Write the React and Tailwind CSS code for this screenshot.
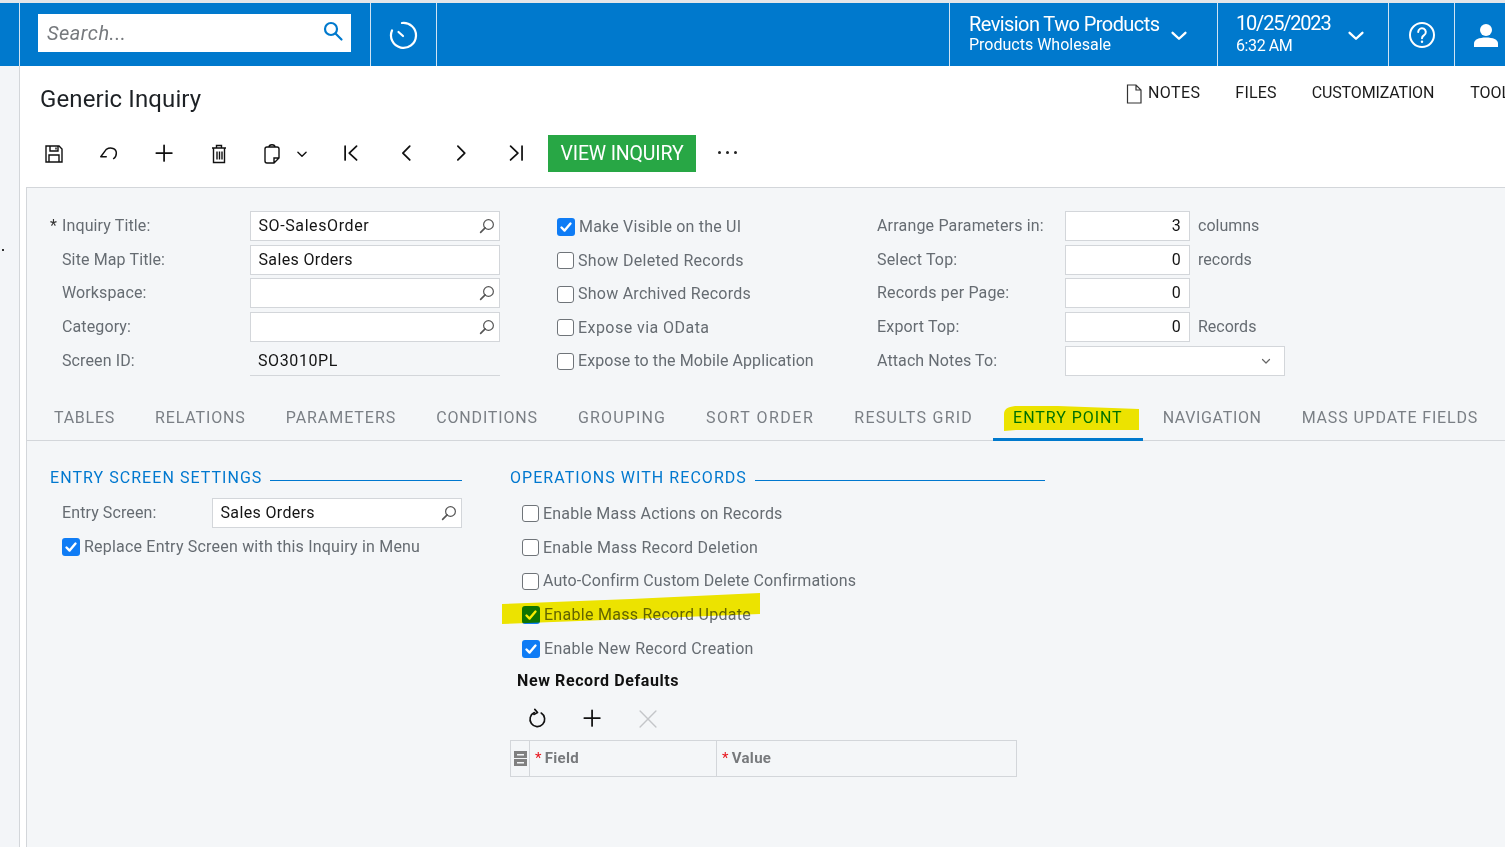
import React from "react";

const S = ({ w = 24, h = 24, vb = "0 0 24 24", c = "", children, sw = 1.8, stroke = "currentColor" }) => (
  <svg width={w} height={h} viewBox={vb} fill="none" stroke={stroke} strokeWidth={sw} strokeLinecap="round" strokeLinejoin="round" className={c}>{children}</svg>
);

const Mag = () => (
  <S w={18} h={18} sw={1.6} stroke="#555"><circle cx="14" cy="10" r="6.5" /><path d="M9.5 14.5 3.5 20.5" strokeWidth="2.2" /></S>
);

const Check = ({ on, label, t = "tracking-[0.2px]" }) => (
  <div className="flex items-center">
    {on ? (
      <span className="w-[18px] h-[18px] rounded-[3px] bg-[#0f7cf5] flex items-center justify-center shrink-0">
        <svg width="14" height="14" viewBox="0 0 14 14" fill="none" stroke="#fff" strokeWidth="2.4" strokeLinecap="round" strokeLinejoin="round"><path d="M2.5 7.5 5.6 10.6 11.5 3.6" /></svg>
      </span>
    ) : (
      <span className="w-[17px] h-[17px] rounded-[3px] bg-white border-[1.5px] border-[#6f7479] shrink-0" />
    )}
    <span className={`ml-[4px] text-[#666c72] whitespace-nowrap ${t}`}>{label}</span>
  </div>
);

const Input = ({ w = "w-[250px]", value, mag, right, track = "tracking-[0.35px]" }) => (
  <div className={`${w} h-[30px] bg-white border border-[#d3d6da] flex items-center pl-[7.5px] pr-[3px] text-[#141414] ${right ? "justify-end pr-[8px]" : "justify-between"}`}>
    <span className={track}>{value}</span>
    {mag && <Mag />}
  </div>
);

const Row = ({ children, c = "" }) => <div className={`h-[33.75px] flex items-center ${c}`}>{children}</div>;

const Section = ({ title }) => (
  <div className="flex items-center h-[20px]">
    <span className="text-[#0078cf] whitespace-nowrap tracking-[1.05px]">{title}</span>
    <span className="flex-1 h-px bg-[#0078cf] ml-[8px] mt-[5px]" />
  </div>
);

const TB = ({ children, w = "w-[55px]" }) => <div className={`${w} h-[37px] flex items-center justify-center text-[#111]`}>{children}</div>;

const tabs = [
  ["TABLES", "tracking-[0.75px]"],
  ["RELATIONS", "tracking-[0.85px]"],
  ["PARAMETERS", "tracking-[0.95px]"],
  ["CONDITIONS", "tracking-[0.85px]"],
  ["GROUPING", "tracking-[1.15px]"],
  ["SORT ORDER", "tracking-[1.5px]"],
  ["RESULTS GRID", "tracking-[1.25px]"],
  ["ENTRY POINT", "tracking-[0.95px]"],
  ["NAVIGATION", "tracking-[0.65px]"],
  ["MASS UPDATE FIELDS", "tracking-[0.85px]"],
];

export default function App() {
  return (
    <div className="relative w-[1505px] h-[847px] overflow-hidden bg-white flex flex-col text-[16px] leading-[20px]" style={{ fontFamily: "Roboto, 'Liberation Sans', sans-serif" }}>
      <div className="h-[3px] bg-[#e4e6e9] shrink-0" />
      <header className="h-[63px] shrink-0 bg-[#0079cd] flex text-white">
        <div className="w-[20px] shrink-0 border-r border-[#cfe3f3]" />
        <div className="w-[351px] shrink-0 border-r border-[#cfe3f3] flex items-center pl-[18px]">
          <div className="w-[313px] h-[38px] mb-[4px] bg-white flex items-center justify-between pl-[9px] pr-[6px]">
            <span className="italic text-[#76797d] text-[20px] tracking-[0.5px]">Search...</span>
            <S w={24} h={24} sw={2.2} stroke="#0079cd" c="mb-[3px]"><circle cx="10" cy="10" r="6" /><path d="M14.5 14.5 20.5 20.5" /></S>
          </div>
        </div>
        <div className="w-[66px] shrink-0 border-r border-[#cfe3f3] flex items-center justify-center">
          <svg width="30" height="30" viewBox="1 0 30 30" fill="none" stroke="#fff" strokeWidth="2.2" strokeLinecap="round"><path d="M14 3A12.500 12.500 0 1 1 4 10.500" /><path d="M10.500 12 15 16" /></svg>
        </div>
        <div className="flex-1 border-r border-[#cfe3f3]" />
        <div className="w-[268px] shrink-0 border-r border-[#cfe3f3] flex items-center pl-[19px] pr-[27px] justify-between">
          <div className="flex flex-col mb-[2px]">
            <span className="text-[20px] leading-[23px] tracking-[-0.58px] whitespace-nowrap">Revision Two Products</span>
            <span className="leading-[18px] text-[16px] whitespace-nowrap">Products Wholesale</span>
          </div>
          <S w={22} h={22} sw={2.6} stroke="#fff" c="mt-[3px]"><path d="M5 8.5 12 15 19 8.5" /></S>
        </div>
        <div className="w-[171px] shrink-0 border-r border-[#cfe3f3] flex items-center pl-[18px] pr-[21px] justify-between">
          <div className="flex flex-col mb-[2px]">
            <span className="text-[20px] leading-[24px] tracking-[-1.2px] whitespace-nowrap">10/25/2023</span>
            <span className="leading-[22px] tracking-[-0.4px] whitespace-nowrap">6:32 AM</span>
          </div>
          <S w={22} h={22} sw={2.6} stroke="#fff" c="mt-[3px]"><path d="M5 8.5 12 15 19 8.5" /></S>
        </div>
        <div className="w-[66px] shrink-0 border-r border-[#cfe3f3] flex items-center justify-center">
          <svg width="28" height="28" viewBox="0 0 28 28" fill="none" stroke="#fff" strokeWidth="2"><circle cx="14" cy="14" r="12" /><path d="M10.2 11a3.8 3.8 0 1 1 5.9 3.2c-1.3.9-2.1 1.6-2.1 3.1" strokeLinecap="round" /><circle cx="14" cy="20.8" r="1.2" fill="#fff" stroke="none" /></svg>
        </div>
        <div className="w-[50px] shrink-0 flex items-center pl-[18px]">
          <svg width="26" height="26" viewBox="0 0 26 26" fill="#fff" className="shrink-0"><circle cx="13" cy="8" r="6" /><path d="M1 25v-3.5C1 17.5 6 15.5 13 15.5s12 2 12 6V25z" /></svg>
        </div>
      </header>

      <div className="flex-1 flex min-h-0">
        <div className="w-[20px] shrink-0 bg-[#f3f5f8] border-r border-[#d3d6da] relative">
          <span className="absolute left-[2px] top-[183px] w-[2px] h-[2px] bg-[#333]" />
        </div>
        <main className="flex-1 min-w-0 flex flex-col">
          <div className="h-[69px] shrink-0 flex justify-between overflow-hidden">
            <h1 className="ml-[20px] mt-[18px] text-[24px] leading-[30px] text-[#1d2125] tracking-[0.1px] whitespace-nowrap">Generic Inquiry</h1>
            <div className="flex pt-[17px] text-[#1a1a1a] whitespace-nowrap w-[380px] shrink-0">
              <svg width="18" height="20" viewBox="0 0 18 20" fill="none" stroke="#333" strokeWidth="1.2" className="mt-[1px] mr-[5px] shrink-0"><path d="M2.5 1h8.5l5 5v13h-13.500zM11 1v5h5" /></svg>
              <span className="mr-[35px] tracking-[0.4px]">NOTES</span>
              <span className="mr-[35px] tracking-[0.2px]">FILES</span>
              <span className="mr-[36px] tracking-[-0.15px]">CUSTOMIZATION</span>
              <span>TOOLS</span>
            </div>
          </div>
          <div className="h-[37px] shrink-0 flex items-center pl-[7px]">
            <TB><svg width="20" height="20" viewBox="0 0 20 20" fill="none" stroke="#111" strokeWidth="1.4" className="mr-[2px]"><path d="M2 2h13l3 3v13H2z" /><path d="M6 2v5h8V2M5 18v-7h10v7M12 3.500v2" /></svg></TB>
            <TB><S w={22} h={22} sw={1.6} c="mr-[2px]"><path d="M9 15H3L9 7C14 4 20 6 20 11C20 14 19 16 17 17" /></S></TB>
            <TB><S w={22} h={22} sw={1.9}><path d="M11 2.500v17M2.500 11h17" /></S></TB>
            <TB><svg width="18" height="20" viewBox="0 0 18 20" fill="none" stroke="#111" strokeWidth="1.4" className="mr-[2px]"><path d="M2 4h14M6.500 4V1.500h5V4M3.500 4v14.500h11V4M7 7.500v8M9.500 7.500v8M12 7.500v8" /></svg></TB>
            <TB w="w-[77px]">
              <svg width="18" height="22" viewBox="0 0 18 22" fill="none" stroke="#111" strokeWidth="1.4" className="mr-[3px]"><path d="M4 4h10a2 2 0 0 1 2 2v9l-5 5H4a2 2 0 0 1-2-2V6a2 2 0 0 1 2-2zM6 4c0-3 6-3 6 0M16 15h-5v5" /></svg>
              <S w={14} h={14} sw={2.4} c="ml-[11px]"><path d="M5 9l7 7 7-7" /></S>
            </TB>
            <TB><S w={22} h={22} sw={1.9}><path d="M4.500 3.500v15M17 3.500 9 11l8 7.500" /></S></TB>
            <TB><S w={22} h={22} sw={1.9}><path d="M15 3.500 7.500 11 15 18.500" /></S></TB>
            <TB><S w={22} h={22} sw={1.9}><path d="M7.500 3.500 15 11l-7.500 7.500" /></S></TB>
            <TB><S w={22} h={22} sw={1.9}><path d="M17.500 3.500v15M5 3.500 13 11l-8 7.500" /></S></TB>
            <button className="ml-[4px] w-[148px] h-[37px] bg-[#28a745] text-white text-[19.5px] tracking-[-0.15px] flex items-center justify-center">VIEW INQUIRY</button>
            <div className="w-[62px] flex justify-center gap-[5px] mb-[3px]">
              <span className="w-[3px] h-[3px] rounded-full bg-[#222]" />
              <span className="w-[3px] h-[3px] rounded-full bg-[#222]" />
              <span className="w-[3px] h-[3px] rounded-full bg-[#222]" />
            </div>
          </div>
          <div className="h-[15px] shrink-0" />

          <div className="flex-1 ml-[6px] bg-[#f4f6f8] border-t border-l border-[#d3d6da] flex flex-col">
            <div className="h-[190px] shrink-0 pt-[21px] flex">
              <div className="w-[473px] shrink-0 pl-[23px] flex flex-col">
                {[["Inquiry Title:", "SO-SalesOrder", true, true, "tracking-[0.6px]"], ["Site Map Title:", "Sales Orders", false, false], ["Workspace:", "", true], ["Category:", "", true]].map(([l, v, m, req, t]) => (
                  <Row key={l}>
                    <span className="w-[12px] text-[#333] shrink-0">{req ? "*" : ""}</span>
                    <span className="w-[188px] text-[#666c72] tracking-[0.12px]">{l}</span>
                    <Input value={v} mag={m} track={t} />
                  </Row>
                ))}
                <Row>
                  <span className="w-[12px] shrink-0" />
                  <span className="w-[188px] text-[#666c72] tracking-[0.12px]">Screen ID:</span>
                  <span className="w-[250px] h-[30px] border-b border-[#d3d6da] pl-[8px] pt-[1px] flex items-center text-[#141414] tracking-[0.6px]">SO3010PL</span>
                </Row>
              </div>
              <div className="w-[57px] shrink-0" />
              <div className="w-[320px] shrink-0 flex flex-col mt-[1.3px]">
                <Row><Check on label="Make Visible on the UI" /></Row>
                <Row><Check label="Show Deleted Records" t="tracking-[0.3px]" /></Row>
                <Row><Check label="Show Archived Records" t="tracking-[0.25px]" /></Row>
                <Row><Check label="Expose via OData" t="tracking-[0.45px]" /></Row>
                <Row><Check label="Expose to the Mobile Application" t="tracking-[0.08px]" /></Row>
              </div>
              <div className="flex-1 flex flex-col">
                {[["Arrange Parameters in:", "3", "columns"], ["Select Top:", "0", "records"], ["Records per Page:", "0", ""], ["Export Top:", "0", "Records"]].map(([l, v, u]) => (
                  <Row key={l}>
                    <span className="w-[188px] text-[#666c72] whitespace-nowrap tracking-[0.18px]">{l}</span>
                    <Input w="w-[125px]" value={v} right />
                    <span className="ml-[8px] text-[#666c72]">{u}</span>
                  </Row>
                ))}
                <Row>
                  <span className="w-[188px] text-[#666c72] tracking-[0.1px]">Attach Notes To:</span>
                  <div className="w-[220px] h-[30px] bg-white border border-[#d3d6da] flex items-center justify-end pr-[12px]">
                    <S w={12} h={12} sw={2.4} stroke="#666"><path d="M5 9l7 7 7-7" /></S>
                  </div>
                </Row>
              </div>
            </div>

            <div className="h-[63px] shrink-0 flex items-stretch border-b border-[#d3d6da] pl-[7px]">
              {tabs.map(([t, tr], i) => (
                <div key={t} className={`px-[20px] pt-[30px] whitespace-nowrap -mb-px ${tr} ${i === 7 ? "text-[#0079cd] border-b-[3px] border-[#0079cd]" : "text-[#7a7f85]"}`}>{t}</div>
              ))}
            </div>

            <div className="flex pt-[27px] pl-[23px]">
              <div className="w-[412px] shrink-0 flex flex-col">
                <Section title="ENTRY SCREEN SETTINGS" />
                <div className="flex items-center pl-[12px] h-[30px] mt-[10px]">
                  <span className="w-[150px] text-[#666c72] tracking-[0.1px]">Entry Screen:</span>
                  <Input value="Sales Orders" mag />
                </div>
                <div className="pl-[12px] mt-[9px] h-[20px] flex items-center"><Check on label="Replace Entry Screen with this Inquiry in Menu" /></div>
              </div>
              <div className="w-[48px] shrink-0" />
              <div className="w-[535px] shrink-0 flex flex-col">
                <Section title="OPERATIONS WITH RECORDS" />
                <div className="pl-[12px] mt-[9px] flex flex-col">
                  <Row><Check label="Enable Mass Actions on Records" /></Row>
                  <Row><Check label="Enable Mass Record Deletion" t="tracking-[0.28px]" /></Row>
                  <Row><Check label="Auto-Confirm Custom Delete Confirmations" t="tracking-[0.1px]" /></Row>
                  <Row><Check on label="Enable Mass Record Update" t="tracking-[0.28px]" /></Row>
                  <Row><Check on label="Enable New Record Creation" t="tracking-[0.3px]" /></Row>
                </div>
                <div className="ml-[7px] mt-[5px] font-bold text-[#111] tracking-[0.6px] whitespace-nowrap">New Record Defaults</div>
                <div className="flex items-center h-[37px] mt-[10px]">
                  <TB><S w={22} h={22} sw={1.8}><path d="M15.500 5.500A8 8 0 1 1 8 5" /><path d="M8.500 1.500 11.500 5 7.500 7" /></S></TB>
                  <TB><S w={22} h={22} sw={1.9}><path d="M11 2.500v17M2.500 11h17" /></S></TB>
                  <TB><S w={20} h={20} sw={1.7} stroke="#c4c6c9"><path d="M2.500 2.500 21.500 21.500M21.500 2.500 2.500 21.500" /></S></TB>
                </div>
                <div className="w-[507px] h-[37px] mt-[2px] border border-[#d3d6da] flex items-center text-[15px] font-bold text-[#77797c] tracking-[0.3px]">
                  <div className="w-[19px] h-full border-r border-[#d3d6da] flex items-center justify-center shrink-0">
                    <svg width="13" height="15" viewBox="0 0 13 15" fill="#808080"><path d="M0 0h13v7H0zM0 8h13v7H0z" /><path d="M3 3h7v1.500H3zM3 11h7v1.500H3z" fill="#f4f6f8" /></svg>
                  </div>
                  <div className="w-[187px] h-full border-r border-[#d3d6da] flex items-center pl-[5px]"><span className="text-[#e8141c] mr-[3px] font-normal">*</span>Field</div>
                  <div className="flex-1 flex items-center pl-[5px]"><span className="text-[#e8141c] mr-[3px] font-normal">*</span>Value</div>
                </div>
              </div>
            </div>
          </div>
        </main>
      </div>

      <svg width="136" height="27" viewBox="0 0 136 27" className="absolute left-[1004px] top-[405px] mix-blend-multiply"><path d="M0 26V9C0 3 6 1 14 1 L54 1 L135 4 V25 L12 25 Z" fill="#f7ec00" /></svg>
      <svg width="260" height="34" viewBox="0 0 260 34" className="absolute left-[501px] top-[592px] mix-blend-multiply"><path d="M1 12 L130 7 L259 1 V22 L130 27 L1 32 Z" fill="#f7ec00" /></svg>
    </div>
  );
}
